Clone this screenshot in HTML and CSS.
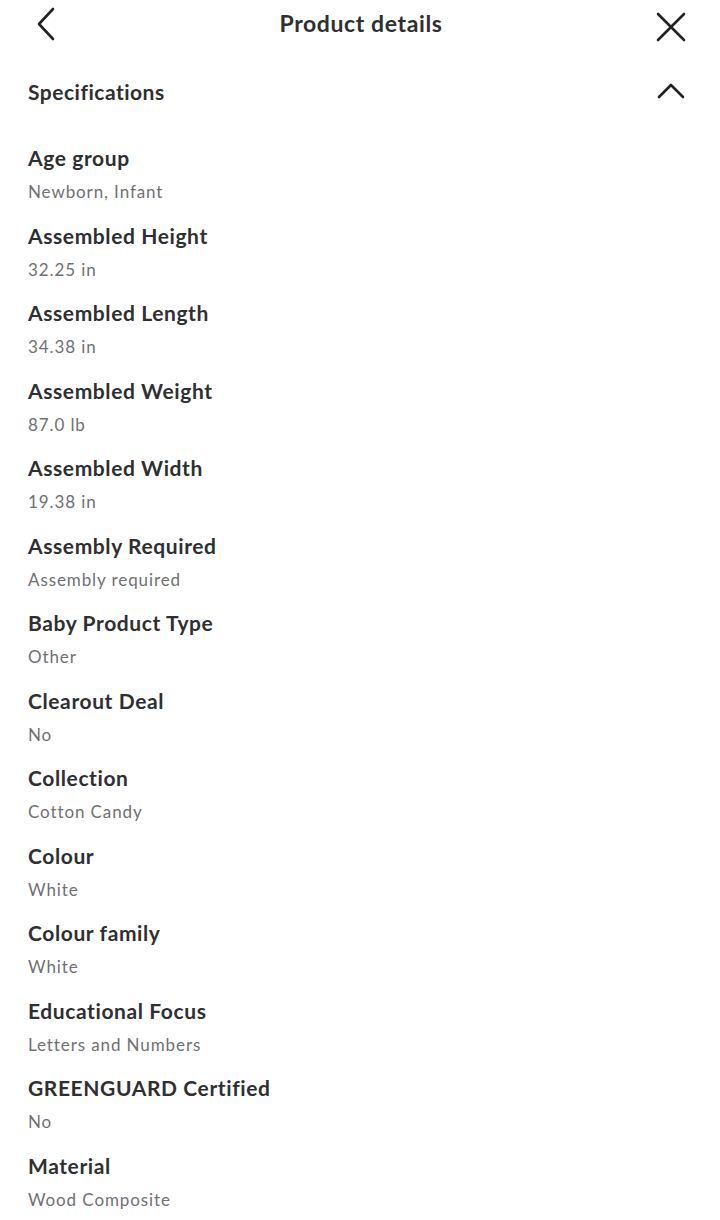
FILE: index.html
```html
<!DOCTYPE html>
<html lang="en">
<head>
<meta charset="utf-8">
<title>Product details</title>
<link rel="stylesheet" href="styles.css">
</head>
<body>
<div class="page">
  <header class="topbar">
    <button class="icon-btn back" aria-label="Back">
      <svg width="20" height="34" viewBox="0 0 20 34"><path d="M17 2 L3 17 L17 32" fill="none" stroke="#222" stroke-width="2.6" stroke-linecap="round" stroke-linejoin="round"/></svg>
    </button>
    <h1 class="title">Product details</h1>
    <button class="icon-btn close" aria-label="Close">
      <svg width="30" height="30" viewBox="0 0 30 30"><path d="M2 2 L28 28 M28 2 L2 28" fill="none" stroke="#222" stroke-width="2.6" stroke-linecap="round"/></svg>
    </button>
  </header>

  <section class="section">
    <div class="section-head">
      <h2 class="section-title">Specifications</h2>
      <svg class="chev-up" width="28" height="16" viewBox="0 0 28 16"><path d="M2 14 L14 2 L26 14" fill="none" stroke="#222" stroke-width="2.6" stroke-linecap="round" stroke-linejoin="round"/></svg>
    </div>

    <dl class="specs">
      <div class="spec"><dt>Age group</dt><dd>Newborn, Infant</dd></div>
      <div class="spec"><dt>Assembled Height</dt><dd>32.25 in</dd></div>
      <div class="spec"><dt>Assembled Length</dt><dd>34.38 in</dd></div>
      <div class="spec"><dt>Assembled Weight</dt><dd>87.0 lb</dd></div>
      <div class="spec"><dt>Assembled Width</dt><dd>19.38 in</dd></div>
      <div class="spec"><dt>Assembly Required</dt><dd>Assembly required</dd></div>
      <div class="spec"><dt>Baby Product Type</dt><dd>Other</dd></div>
      <div class="spec"><dt>Clearout Deal</dt><dd>No</dd></div>
      <div class="spec"><dt>Collection</dt><dd>Cotton Candy</dd></div>
      <div class="spec"><dt>Colour</dt><dd>White</dd></div>
      <div class="spec"><dt>Colour family</dt><dd>White</dd></div>
      <div class="spec"><dt>Educational Focus</dt><dd>Letters and Numbers</dd></div>
      <div class="spec"><dt>GREENGUARD Certified</dt><dd>No</dd></div>
      <div class="spec"><dt>Material</dt><dd>Wood Composite</dd></div>
    </dl>
  </section>
</div>
</body>
</html>
```

FILE: styles.css
```css
* { box-sizing: border-box; }
html, body { margin: 0; padding: 0; background: #fff; }
body {
  font-family: Lato, "Noto Sans", "Liberation Sans", sans-serif;
  color: #2e2f32;
  width: 720px;
  height: 1220px;
  overflow: hidden;
}
.page { padding: 0; }

.topbar {
  height: 50px;
  display: grid;
  grid-template-columns: 1fr auto 1fr;
  align-items: center;
  padding: 0 34px 0 36px;
}
.icon-btn {
  border: 0;
  background: none;
  padding: 0;
  display: flex;
  align-items: center;
}
.back { margin-top: -2px; justify-self: start; }
.close { margin-top: 4px; justify-self: end; }
.title {
  margin: -4px 0 0 0;
  font-size: 23px;
  font-weight: 700;
  letter-spacing: 0.6px;
  color: #2e2f32;
  text-align: center;
}

.section { padding: 0 28px; }
.section-head {
  display: flex;
  align-items: center;
  justify-content: space-between;
  height: 42px;
  margin-top: 20px;
}
.section-title {
  margin: 0;
  font-size: 21px;
  font-weight: 700;
  letter-spacing: 0.5px;
}
.chev-up { margin-right: 7px; }

.specs { margin: 29px 0 0 0; padding: 0; }
.spec { padding-bottom: 9.5px; }
.spec dt {
  line-height: 34px;
  font-size: 21px;
  font-weight: 700;
  letter-spacing: 0.6px;
  color: #2e2f32;
}
.spec dd {
  margin: 0;
  line-height: 34px;
  font-size: 17px;
  letter-spacing: 0.9px;
  color: #6f7075;
}
```
